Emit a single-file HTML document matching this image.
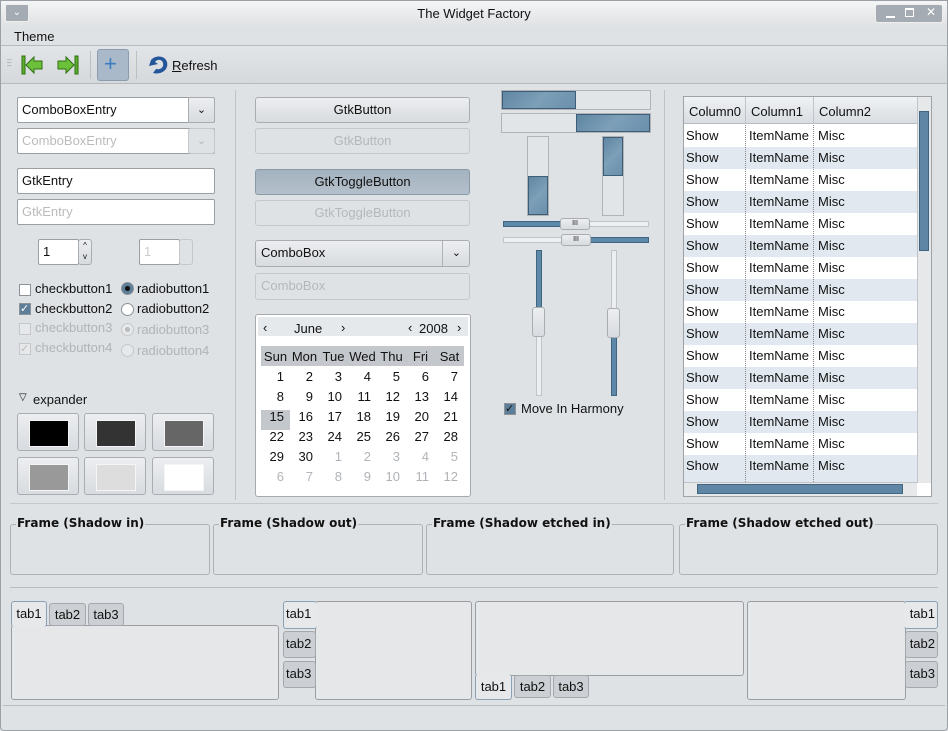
<!DOCTYPE html>
<html><head><meta charset="utf-8"><style>
*{box-sizing:border-box;margin:0;padding:0}
body{width:948px;height:731px;overflow:hidden;background:#dfe2e5;font-family:"Liberation Sans","DejaVu Sans",sans-serif;font-size:13px;color:#111;position:relative}
.a{position:absolute}
.btn{position:absolute;border:1px solid #a9adb1;border-radius:3px;background:linear-gradient(#eceef0,#d8dbdf);text-align:center;line-height:23px}
.dis{color:#b4b8bc;background:#dfe2e5;border-color:#c4c8cc}
.ent{position:absolute;border:1px solid #9a9fa4;border-radius:2px;background:#fff;padding-left:4px;line-height:23px}
.t{position:absolute;white-space:nowrap}
.g{color:#b0b4b8}
.cb{position:absolute;width:12px;height:12px;border:1px solid #8d9298;background:#fff}
.rb{position:absolute;width:13px;height:13px;border:1px solid #8d9298;border-radius:50%;background:#fff}
.frm{position:absolute;border:1px solid #aeb2b6;border-radius:3px}
.fl{position:absolute;top:-9px;left:5px;background:#dfe2e5;font-weight:bold;padding:0 1px;font-family:"DejaVu Sans",sans-serif;font-size:12px}
.tab{position:absolute;border:1px solid #a4a8ac;border-radius:3px;background:#ccd0d4;text-align:center;line-height:24px}
.act{background:#e6e8ea;border-color:#8aa0b4}
.panel{position:absolute;border:1px solid #9a9ea2;border-radius:3px;background:#e5e7e9}
.pb{position:absolute;background:linear-gradient(135deg,#5f86a2,#7d9fb8 50%,#6a90ac);border:1px solid #3f5d74}
.row{position:absolute;left:684px;width:233px;height:22px;line-height:22px}
.sw{position:absolute;width:62px;height:38px}
.sw i{position:absolute;left:11px;top:6px;width:40px;height:27px;border:1px solid #f4f5f6}
.cal{table-layout:fixed}
.cal td{text-align:right;padding-right:6px;height:20px;width:29px}
.chev{font-size:11px;line-height:25px}
</style></head><body>
<div class="a" style="left:0;top:0;width:948px;height:27px;background:linear-gradient(#f4f5f6,#dfe1e3);border-top:1px solid #9aa0a6"></div>
<div class="a" style="left:5px;top:4px;width:24px;height:18px;background:#a5abb2;border-radius:2px;border:1px solid #eee;color:#fff;text-align:center;font-size:10px;line-height:16px">&#8964;</div>
<div class="t" style="left:0;width:948px;text-align:center;top:6px">The Widget Factory</div>
<div class="a" style="left:875px;top:4px;width:68px;height:19px;background:#a5abb2;border-radius:3px;border:1px solid #eee"></div>
<div class="a" style="left:886px;top:16px;width:9px;height:2px;background:#fff"></div>
<div class="a" style="left:905px;top:8px;width:9px;height:9px;border:2px solid #fff;border-width:2px 1px 1px 1px"></div>
<div class="t" style="left:926px;top:5px;color:#fff;font-size:12px;font-weight:bold">✕</div>
<div class="a" style="left:0;top:45px;width:948px;height:1px;background:#b6babe"></div>
<div class="t" style="left:14px;top:29px">Theme</div>
<div class="a" style="left:0;top:46px;width:948px;height:37px;background:linear-gradient(#e2e5e7,#d6d9dc)"></div>
<div class="a" style="left:0;top:83px;width:948px;height:1px;background:#b6babe"></div>
<div class="t" style="left:7px;top:58px;color:#999;font-size:8px;line-height:3px">–<br>–<br>–</div>
<svg class="a" style="left:20px;top:54px" width="24" height="22"><rect x="2" y="2" width="3" height="18" fill="#5cae2c" stroke="#2e7012"/><path d="M6 11 L14 3 V7 H22 V15 H14 V19 Z" fill="#6cc03a" stroke="#2e7012"/></svg>
<svg class="a" style="left:56px;top:54px" width="24" height="22"><rect x="19" y="2" width="3" height="18" fill="#5cae2c" stroke="#2e7012"/><path d="M18 11 L10 3 V7 H2 V15 H10 V19 Z" fill="#6cc03a" stroke="#2e7012"/></svg>
<div class="a" style="left:90px;top:51px;width:1px;height:28px;background:#bcc0c4"></div>
<div class="a" style="left:97px;top:49px;width:32px;height:32px;background:#a9b9c9;border:1px solid #8a9cae;border-radius:3px"></div>
<div class="t" style="left:104px;top:51px;color:#3a7cc0;font-size:22px;line-height:26px">+</div>
<div class="a" style="left:136px;top:51px;width:1px;height:28px;background:#bcc0c4"></div>
<svg class="a" style="left:147px;top:54px" width="24" height="22"><path d="M4 6 C8 1 18 1 20 8 C22 16 14 21 6 19 L9 15 C14 16 17 13 16 9 C15 5 10 5 8 8 L11 10 L2 12 Z" fill="#24569a"/></svg>
<div class="t" style="left:172px;top:58px"><u>R</u>efresh</div>
<div class="ent" style="left:17px;top:97px;width:198px;height:26px">ComboBoxEntry</div>
<div class="btn chev" style="left:188px;top:97px;width:27px;height:26px;border-radius:0 2px 2px 0">⌄</div>
<div class="ent dis" style="left:17px;top:128px;width:198px;height:26px;color:#bbb">ComboBoxEntry</div>
<div class="btn dis chev" style="left:188px;top:128px;width:27px;height:26px">⌄</div>
<div class="ent" style="left:17px;top:168px;width:198px;height:26px">GtkEntry</div>
<div class="ent dis" style="left:17px;top:199px;width:198px;height:26px;color:#bbb">GtkEntry</div>
<div class="ent" style="left:38px;top:239px;width:41px;height:26px">1</div>
<div class="btn" style="left:78px;top:239px;width:14px;height:26px;font-size:8px;line-height:11px">^<br>v</div>
<div class="ent dis" style="left:139px;top:239px;width:41px;height:26px;color:#ccc">1</div>
<div class="btn dis" style="left:179px;top:239px;width:14px;height:26px"></div>
<div class="cb" style="left:19px;top:284px"></div><div class="t" style="left:35px;top:281px">checkbutton1</div>
<div class="cb" style="left:19px;top:303px;background:#5d7e98;color:#fff;font-size:11px;line-height:10px">✓</div><div class="t" style="left:35px;top:301px">checkbutton2</div>
<div class="cb" style="left:19px;top:323px;border-color:#c4c8cc;background:#e6e8ea"></div><div class="t g" style="left:35px;top:320px">checkbutton3</div>
<div class="cb" style="left:19px;top:343px;border-color:#c4c8cc;background:#e6e8ea;color:#bbb;font-size:11px;line-height:10px">✓</div><div class="t g" style="left:35px;top:340px">checkbutton4</div>
<div class="rb" style="left:121px;top:282px;background:radial-gradient(#111 30%,#5d7e98 35%)"></div><div class="t" style="left:137px;top:281px">radiobutton1</div>
<div class="rb" style="left:121px;top:303px"></div><div class="t" style="left:137px;top:301px">radiobutton2</div>
<div class="rb" style="left:121px;top:323px;border-color:#c4c8cc;background:radial-gradient(#bbb 30%,#e6e8ea 35%)"></div><div class="t g" style="left:137px;top:322px">radiobutton3</div>
<div class="rb" style="left:121px;top:344px;border-color:#c4c8cc;background:#e6e8ea"></div><div class="t g" style="left:137px;top:343px">radiobutton4</div>
<div class="t" style="left:19px;top:392px;font-size:10px">▽</div><div class="t" style="left:33px;top:392px">expander</div>
<div class="btn sw" style="left:17px;top:413px"><i style="background:#000"></i></div>
<div class="btn sw" style="left:84px;top:413px"><i style="background:#333"></i></div>
<div class="btn sw" style="left:152px;top:413px"><i style="background:#666"></i></div>
<div class="btn sw" style="left:17px;top:457px"><i style="background:#999"></i></div>
<div class="btn sw" style="left:84px;top:457px"><i style="background:#ddd"></i></div>
<div class="btn sw" style="left:152px;top:457px"><i style="background:#fff"></i></div>
<div class="a" style="left:235px;top:90px;width:1px;height:410px;background:#bfc3c7"></div>
<div class="btn" style="left:255px;top:97px;width:215px;height:26px">GtkButton</div>
<div class="btn dis" style="left:255px;top:128px;width:215px;height:26px">GtkButton</div>
<div class="btn" style="left:255px;top:169px;width:215px;height:26px;background:linear-gradient(#a4b2bf,#b4c0cb);border-color:#8899a8">GtkToggleButton</div>
<div class="btn dis" style="left:255px;top:200px;width:215px;height:26px">GtkToggleButton</div>
<div class="btn" style="left:255px;top:240px;width:215px;height:27px;text-align:left;padding-left:5px">ComboBox<span style="position:absolute;left:186px;top:0;width:1px;height:25px;background:#b0b4b8"></span><span class="a chev" style="right:8px;top:0">⌄</span></div>
<div class="btn dis" style="left:255px;top:273px;width:215px;height:27px;text-align:left;padding-left:5px">ComboBox</div>
<div class="a" style="left:255px;top:314px;width:216px;height:183px;border:1px solid #a6aaae;border-radius:3px;background:#fff"></div>
<div class="a" style="left:258px;top:317px;width:210px;height:19px;background:#e6e9ec"></div>
<div class="t" style="left:263px;top:320px">‹</div><div class="t" style="left:294px;top:321px">June</div><div class="t" style="left:341px;top:320px">›</div>
<div class="t" style="left:408px;top:320px">‹</div><div class="t" style="left:419px;top:321px">2008</div><div class="t" style="left:457px;top:320px">›</div>
<div class="a" style="left:261px;top:346px;width:203px;height:20px;background:#c4c8cc"></div>
<div class="a" style="left:261px;top:410px;width:29px;height:20px;background:#c4c8cc"></div>
<table class="a cal" style="left:261px;top:346px;width:203px;border-collapse:collapse;font-size:13px">
<tr><td style="padding:0;text-align:center">Sun</td><td style="padding:0;text-align:center">Mon</td><td style="padding:0;text-align:center">Tue</td><td style="padding:0;text-align:center">Wed</td><td style="padding:0;text-align:center">Thu</td><td style="padding:0;text-align:center">Fri</td><td style="padding:0;text-align:center">Sat</td></tr>
<tr><td>1</td><td>2</td><td>3</td><td>4</td><td>5</td><td>6</td><td>7</td></tr>
<tr><td>8</td><td>9</td><td>10</td><td>11</td><td>12</td><td>13</td><td>14</td></tr>
<tr><td>15</td><td>16</td><td>17</td><td>18</td><td>19</td><td>20</td><td>21</td></tr>
<tr><td>22</td><td>23</td><td>24</td><td>25</td><td>26</td><td>27</td><td>28</td></tr>
<tr><td>29</td><td>30</td><td class="g">1</td><td class="g">2</td><td class="g">3</td><td class="g">4</td><td class="g">5</td></tr>
<tr class="g"><td>6</td><td>7</td><td>8</td><td>9</td><td>10</td><td>11</td><td>12</td></tr>
</table>
<div class="a" style="left:501px;top:90px;width:150px;height:20px;border:1px solid #b0b4b8;background:#e2e5e8"></div>
<div class="pb" style="left:502px;top:91px;width:74px;height:18px"></div>
<div class="a" style="left:501px;top:113px;width:150px;height:20px;border:1px solid #b0b4b8;background:#e2e5e8"></div>
<div class="pb" style="left:576px;top:114px;width:74px;height:18px"></div>
<div class="a" style="left:527px;top:136px;width:22px;height:80px;border:1px solid #b0b4b8;background:#e2e5e8"></div>
<div class="pb" style="left:528px;top:176px;width:20px;height:39px"></div>
<div class="a" style="left:602px;top:136px;width:22px;height:80px;border:1px solid #b0b4b8;background:#e2e5e8"></div>
<div class="pb" style="left:603px;top:137px;width:20px;height:39px"></div>
<div class="a" style="left:503px;top:221px;width:146px;height:6px;border:1px solid #c0c4c8;background:#eceef0"></div>
<div class="a" style="left:503px;top:221px;width:60px;height:6px;background:#5d88a8;border:1px solid #3f6580"></div>
<div class="btn" style="left:560px;top:218px;width:30px;height:12px;font-size:7px;line-height:10px">III</div>
<div class="a" style="left:503px;top:237px;width:146px;height:6px;border:1px solid #c0c4c8;background:#eceef0"></div>
<div class="a" style="left:590px;top:237px;width:59px;height:6px;background:#5d88a8;border:1px solid #3f6580"></div>
<div class="btn" style="left:561px;top:234px;width:30px;height:12px;font-size:7px;line-height:10px">III</div>
<div class="a" style="left:536px;top:250px;width:6px;height:146px;border:1px solid #c0c4c8;background:#eceef0"></div>
<div class="a" style="left:536px;top:250px;width:6px;height:60px;background:#5d88a8;border:1px solid #3f6580"></div>
<div class="btn" style="left:532px;top:307px;width:13px;height:30px"></div>
<div class="a" style="left:611px;top:250px;width:6px;height:146px;border:1px solid #c0c4c8;background:#eceef0"></div>
<div class="a" style="left:611px;top:337px;width:6px;height:59px;background:#5d88a8;border:1px solid #3f6580"></div>
<div class="btn" style="left:607px;top:308px;width:13px;height:30px"></div>
<div class="cb" style="left:504px;top:403px;background:#5d7e98;color:#111;font-size:11px;line-height:10px">✓</div>
<div class="t" style="left:521px;top:401px">Move In Harmony</div>
<div class="a" style="left:664px;top:90px;width:1px;height:410px;background:#bfc3c7"></div>
<div class="a" style="left:683px;top:96px;width:249px;height:401px;border:1px solid #9da2a7;background:#fff"></div>
<div class="a" style="left:684px;top:97px;width:233px;height:27px;background:linear-gradient(#f0f2f4,#d9dde1);border-bottom:1px solid #b8bcc0"></div>
<div class="t" style="left:689px;top:104px">Column0</div><div class="t" style="left:751px;top:104px">Column1</div><div class="t" style="left:819px;top:104px">Column2</div>
<div class="a" style="left:745px;top:97px;width:1px;height:27px;background:#c0c4c8"></div>
<div class="a" style="left:813px;top:97px;width:1px;height:27px;background:#c0c4c8"></div>
<div class="row" style="top:125px;background:#fff"><span class="t" style="left:2px">Show</span><span class="t" style="left:65px">ItemName</span><span class="t" style="left:134px">Misc</span></div>
<div class="row" style="top:147px;background:#e1e8ef"><span class="t" style="left:2px">Show</span><span class="t" style="left:65px">ItemName</span><span class="t" style="left:134px">Misc</span></div>
<div class="row" style="top:169px;background:#fff"><span class="t" style="left:2px">Show</span><span class="t" style="left:65px">ItemName</span><span class="t" style="left:134px">Misc</span></div>
<div class="row" style="top:191px;background:#e1e8ef"><span class="t" style="left:2px">Show</span><span class="t" style="left:65px">ItemName</span><span class="t" style="left:134px">Misc</span></div>
<div class="row" style="top:213px;background:#fff"><span class="t" style="left:2px">Show</span><span class="t" style="left:65px">ItemName</span><span class="t" style="left:134px">Misc</span></div>
<div class="row" style="top:235px;background:#e1e8ef"><span class="t" style="left:2px">Show</span><span class="t" style="left:65px">ItemName</span><span class="t" style="left:134px">Misc</span></div>
<div class="row" style="top:257px;background:#fff"><span class="t" style="left:2px">Show</span><span class="t" style="left:65px">ItemName</span><span class="t" style="left:134px">Misc</span></div>
<div class="row" style="top:279px;background:#e1e8ef"><span class="t" style="left:2px">Show</span><span class="t" style="left:65px">ItemName</span><span class="t" style="left:134px">Misc</span></div>
<div class="row" style="top:301px;background:#fff"><span class="t" style="left:2px">Show</span><span class="t" style="left:65px">ItemName</span><span class="t" style="left:134px">Misc</span></div>
<div class="row" style="top:323px;background:#e1e8ef"><span class="t" style="left:2px">Show</span><span class="t" style="left:65px">ItemName</span><span class="t" style="left:134px">Misc</span></div>
<div class="row" style="top:345px;background:#fff"><span class="t" style="left:2px">Show</span><span class="t" style="left:65px">ItemName</span><span class="t" style="left:134px">Misc</span></div>
<div class="row" style="top:367px;background:#e1e8ef"><span class="t" style="left:2px">Show</span><span class="t" style="left:65px">ItemName</span><span class="t" style="left:134px">Misc</span></div>
<div class="row" style="top:389px;background:#fff"><span class="t" style="left:2px">Show</span><span class="t" style="left:65px">ItemName</span><span class="t" style="left:134px">Misc</span></div>
<div class="row" style="top:411px;background:#e1e8ef"><span class="t" style="left:2px">Show</span><span class="t" style="left:65px">ItemName</span><span class="t" style="left:134px">Misc</span></div>
<div class="row" style="top:433px;background:#fff"><span class="t" style="left:2px">Show</span><span class="t" style="left:65px">ItemName</span><span class="t" style="left:134px">Misc</span></div>
<div class="row" style="top:455px;background:#e1e8ef;height:27px"><span class="t" style="left:2px">Show</span><span class="t" style="left:65px">ItemName</span><span class="t" style="left:134px">Misc</span></div>
<div class="a" style="left:745px;top:125px;height:357px;border-left:1px dotted #888"></div>
<div class="a" style="left:813px;top:125px;height:357px;border-left:1px dotted #888"></div>
<div class="a" style="left:917px;top:97px;width:14px;height:386px;background:#e6e8ea;border-left:1px solid #c0c4c8"></div>
<div class="a" style="left:919px;top:111px;width:10px;height:140px;background:#5f86a4;border:1px solid #3f6580"></div>
<div class="a" style="left:684px;top:482px;width:233px;height:14px;background:#e6e8ea;border-top:1px solid #c0c4c8"></div>
<div class="a" style="left:697px;top:484px;width:206px;height:10px;background:#5f86a4;border:1px solid #3f6580"></div>
<div class="a" style="left:10px;top:503px;width:928px;height:1px;background:#c4c8cc"></div>
<div class="frm" style="left:10px;top:524px;width:200px;height:51px"><span class="fl">Frame (Shadow in)</span></div>
<div class="frm" style="left:213px;top:524px;width:210px;height:51px"><span class="fl">Frame (Shadow out)</span></div>
<div class="frm" style="left:426px;top:524px;width:248px;height:51px"><span class="fl">Frame (Shadow etched in)</span></div>
<div class="frm" style="left:679px;top:524px;width:259px;height:51px"><span class="fl">Frame (Shadow etched out)</span></div>
<div class="a" style="left:10px;top:587px;width:928px;height:1px;background:#b8bcc0"></div>
<div class="panel" style="left:11px;top:625px;width:268px;height:75px"></div>
<div class="tab act" style="left:11px;top:601px;width:36px;height:26px;border-bottom:none">tab1</div>
<div class="tab" style="left:49px;top:603px;width:37px;height:23px;line-height:22px">tab2</div>
<div class="tab" style="left:88px;top:603px;width:36px;height:23px;line-height:22px">tab3</div>
<div class="panel" style="left:315px;top:601px;width:157px;height:99px"></div>
<div class="tab act" style="left:283px;top:601px;width:34px;height:28px;border-right:none;text-align:left;padding-left:2px">tab1</div>
<div class="tab" style="left:283px;top:631px;width:33px;height:27px;text-align:left;padding-left:2px">tab2</div>
<div class="tab" style="left:283px;top:661px;width:33px;height:27px;text-align:left;padding-left:2px">tab3</div>
<div class="panel" style="left:475px;top:601px;width:269px;height:75px"></div>
<div class="tab act" style="left:475px;top:674px;width:37px;height:26px;border-top:none;line-height:26px">tab1</div>
<div class="tab" style="left:514px;top:675px;width:37px;height:23px;line-height:22px">tab2</div>
<div class="tab" style="left:553px;top:675px;width:36px;height:23px;line-height:22px">tab3</div>
<div class="panel" style="left:747px;top:601px;width:159px;height:99px"></div>
<div class="tab act" style="left:904px;top:601px;width:34px;height:28px;border-left:none;text-align:right;padding-right:2px">tab1</div>
<div class="tab" style="left:905px;top:631px;width:33px;height:27px;text-align:right;padding-right:2px">tab2</div>
<div class="tab" style="left:905px;top:661px;width:33px;height:27px;text-align:right;padding-right:2px">tab3</div>
<div class="a" style="left:3px;top:705px;width:942px;height:1px;background:#b8bcc0"></div>
<div class="a" style="left:0;top:0;width:948px;height:731px;border:1px solid #9aa0a6;border-top:none;border-radius:0 0 4px 4px;pointer-events:none"></div>
</body></html>
